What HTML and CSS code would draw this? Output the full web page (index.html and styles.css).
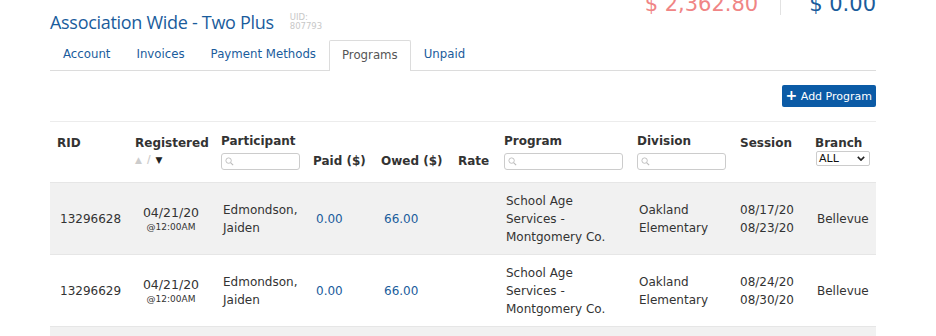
FILE: index.html
```html
<!DOCTYPE html>
<html lang="en">
<head>
  <meta charset="UTF-8">
  <title>Programs</title>
  <link rel="stylesheet" href="styles.css">
</head>
<body>

  <div class="page">
    <div class="top">
      <div class="title-block">
        <h1 class="title">Association Wide - Two Plus</h1>
        <div class="uid">UID:<br>807793</div>
      </div>
      <div class="totals">
        <span class="total due">$ 2,362.80</span>
        <span class="divider"></span>
        <span class="total credit">$ 0.00</span>
      </div>
    </div>

    <ul class="tabs">
      <li class="tab">Account</li>
      <li class="tab">Invoices</li>
      <li class="tab">Payment Methods</li>
      <li class="tab active">Programs</li>
      <li class="tab">Unpaid</li>
    </ul>

    <div class="actions">
      <button class="btn-add"><span class="plus">+</span> Add Program</button>
    </div>

    <table class="programs">
      <colgroup>
        <col style="width:78px">
        <col style="width:86px">
        <col style="width:92px">
        <col style="width:68px">
        <col style="width:77px">
        <col style="width:46px">
        <col style="width:133px">
        <col style="width:103px">
        <col style="width:75px">
        <col style="width:68px">
      </colgroup>
      <thead>
        <tr>
          <th class="h-mid">RID</th>
          <th class="h-mid">Registered
            <div class="sort"><span class="off">&#9650;</span><span class="off slash">/</span><span>&#9660;</span></div>
          </th>
          <th class="h-top">Participant
            <div class="search"><svg viewBox="0 0 10 10" width="9" height="9"><circle cx="4" cy="4" r="3" fill="none" stroke="#bbb" stroke-width="1"/><path d="M6.2 6.2 L9 9" stroke="#bbb" stroke-width="1.2"/></svg></div>
          </th>
          <th class="h-low">Paid ($)</th>
          <th class="h-low">Owed ($)</th>
          <th class="h-low">Rate</th>
          <th class="h-top">Program
            <div class="search"><svg viewBox="0 0 10 10" width="9" height="9"><circle cx="4" cy="4" r="3" fill="none" stroke="#bbb" stroke-width="1"/><path d="M6.2 6.2 L9 9" stroke="#bbb" stroke-width="1.2"/></svg></div>
          </th>
          <th class="h-top">Division
            <div class="search"><svg viewBox="0 0 10 10" width="9" height="9"><circle cx="4" cy="4" r="3" fill="none" stroke="#bbb" stroke-width="1"/><path d="M6.2 6.2 L9 9" stroke="#bbb" stroke-width="1.2"/></svg></div>
          </th>
          <th class="h-mid">Session</th>
          <th class="h-mid">Branch
            <div class="select">ALL <svg viewBox="0 0 10 6" width="8" height="5"><path d="M1 1 L5 5 L9 1" fill="none" stroke="#222" stroke-width="2"/></svg></div>
          </th>
        </tr>
      </thead>
      <tbody>
        <tr class="odd">
          <td class="rid">13296628</td>
          <td class="date">04/21/20<small>@12:00AM</small></td>
          <td>Edmondson,<br>Jaiden</td>
          <td class="money">0.00</td>
          <td class="money">66.00</td>
          <td></td>
          <td>School Age<br>Services -<br>Montgomery Co.</td>
          <td>Oakland<br>Elementary</td>
          <td class="session">08/17/20<br>08/23/20</td>
          <td>Bellevue</td>
        </tr>
        <tr>
          <td class="rid">13296629</td>
          <td class="date">04/21/20<small>@12:00AM</small></td>
          <td>Edmondson,<br>Jaiden</td>
          <td class="money">0.00</td>
          <td class="money">66.00</td>
          <td></td>
          <td>School Age<br>Services -<br>Montgomery Co.</td>
          <td>Oakland<br>Elementary</td>
          <td class="session">08/24/20<br>08/30/20</td>
          <td>Bellevue</td>
        </tr>
        <tr class="odd">
          <td colspan="10" class="stub"></td>
        </tr>
      </tbody>
    </table>
  </div>

</body>
</html>
```

FILE: styles.css
```css
html, body {
  margin: 0;
  background: #fff;
  font-family: "DejaVu Sans", Verdana, sans-serif;
  font-size: 12px;
  color: #333;
  overflow: hidden;
}

.page {
  width: 826px;
  margin: 0 0 0 50px;
}

.top {
  display: flex;
  justify-content: space-between;
  height: 40px;
}

.title-block {
  display: flex;
  align-items: flex-start;
  gap: 16px;
  padding-top: 9px;
}

.title {
  margin: 0;
  font-family: "Open Sans", sans-serif;
  font-weight: 400;
  font-size: 18px;
  letter-spacing: -0.3px;
  line-height: 26px;
  color: #1a5c9c;
}

.uid {
  font-size: 8.5px;
  line-height: 9px;
  color: #c8c8c8;
  padding-top: 4px;
}

.totals {
  display: flex;
  align-items: flex-start;
  margin-top: -11px;
  height: 30px;
}

.total {
  font-size: 21px;
  line-height: 30px;
}

.due {
  color: #f08585;
}

.credit {
  color: #1a5c9c;
}

.divider {
  width: 1px;
  height: 26px;
  background: #e2e2e2;
  margin: 0 28px 0 22px;
}

.tabs {
  display: flex;
  list-style: none;
  margin: 0;
  padding: 0;
  border-bottom: 1px solid #dcdcdc;
  font-size: 11.75px;
}

.tab {
  padding: 0 13px;
  height: 29px;
  line-height: 29px;
  color: #1a5c9c;
}

.tab.active {
  color: #555;
  background: #fff;
  border: 1px solid #dcdcdc;
  border-bottom: 0;
  border-radius: 2px 2px 0 0;
  padding: 0 12px;
  margin-bottom: -1px;
  height: 30px;
}

.actions {
  display: flex;
  justify-content: flex-end;
  padding: 14px 0 14px;
}

.btn-add {
  font-family: "DejaVu Sans", sans-serif;
  font-size: 11px;
  color: #fff;
  background: #0b5ba6;
  border: 0;
  border-radius: 2px;
  height: 22px;
  padding: 0 4px 0 4px;
}

.plus {
  font-weight: bold;
  font-size: 14px;
  line-height: 10px;
}

.programs {
  width: 826px;
  table-layout: fixed;
  border-collapse: collapse;
  border-top: 1px solid #ececec;
}

.programs thead tr {
  height: 61px;
}

.programs th {
  text-align: left;
  font-weight: bold;
  padding: 0 7px;
  color: #333;
  vertical-align: top;
  white-space: nowrap;
}

.h-mid {
  padding-top: 14px !important;
}

.h-top {
  padding-top: 12px !important;
}

.h-low {
  padding-top: 32px !important;
}

.sort {
  font-size: 9px;
  line-height: 12px;
  margin-top: 4px;
  color: #222;
  display: flex;
  gap: 5px;
}

.sort .off {
  color: #ccc;
}

.sort .slash {
  font-size: 10px;
}

.search {
  width: 74px;
  height: 15px;
  border: 1px solid #ccc;
  border-radius: 3px;
  margin-top: 5px;
  display: flex;
  align-items: center;
  padding-left: 3px;
  background: #fff;
}

.programs th:nth-child(7) .search {
  width: 114px;
}

.programs th:nth-child(8) .search {
  width: 84px;
}

.select {
  display: flex;
  align-items: center;
  justify-content: space-between;
  width: 46px;
  height: 13px;
  border: 1px solid #ccc;
  border-radius: 2px;
  margin: 1px 0 0 1px;
  padding: 0 4px 0 2px;
  font-weight: normal;
  font-size: 11px;
  color: #111;
  background: #fff;
}

.programs td {
  height: 71px;
  padding: 0 0 0 9px;
  line-height: 18px;
  vertical-align: middle;
  color: #333;
}

.programs tbody tr {
  border-top: 1px solid #e6e6e6;
}

.programs tr.odd td {
  background: #f1f1f1;
}

.programs td.rid {
  padding-left: 10px;
}

.programs td.date {
  text-align: center;
  padding: 0;
  line-height: 16px;
  font-size: 12.5px;
}

.date small {
  display: block;
  font-size: 9px;
  line-height: 12px;
}

.programs td.money {
  color: #1a5c9c;
  padding-left: 10px;
}

.programs td.session {
  padding-left: 7px;
}

.programs td.stub {
  height: 20px;
}
```
